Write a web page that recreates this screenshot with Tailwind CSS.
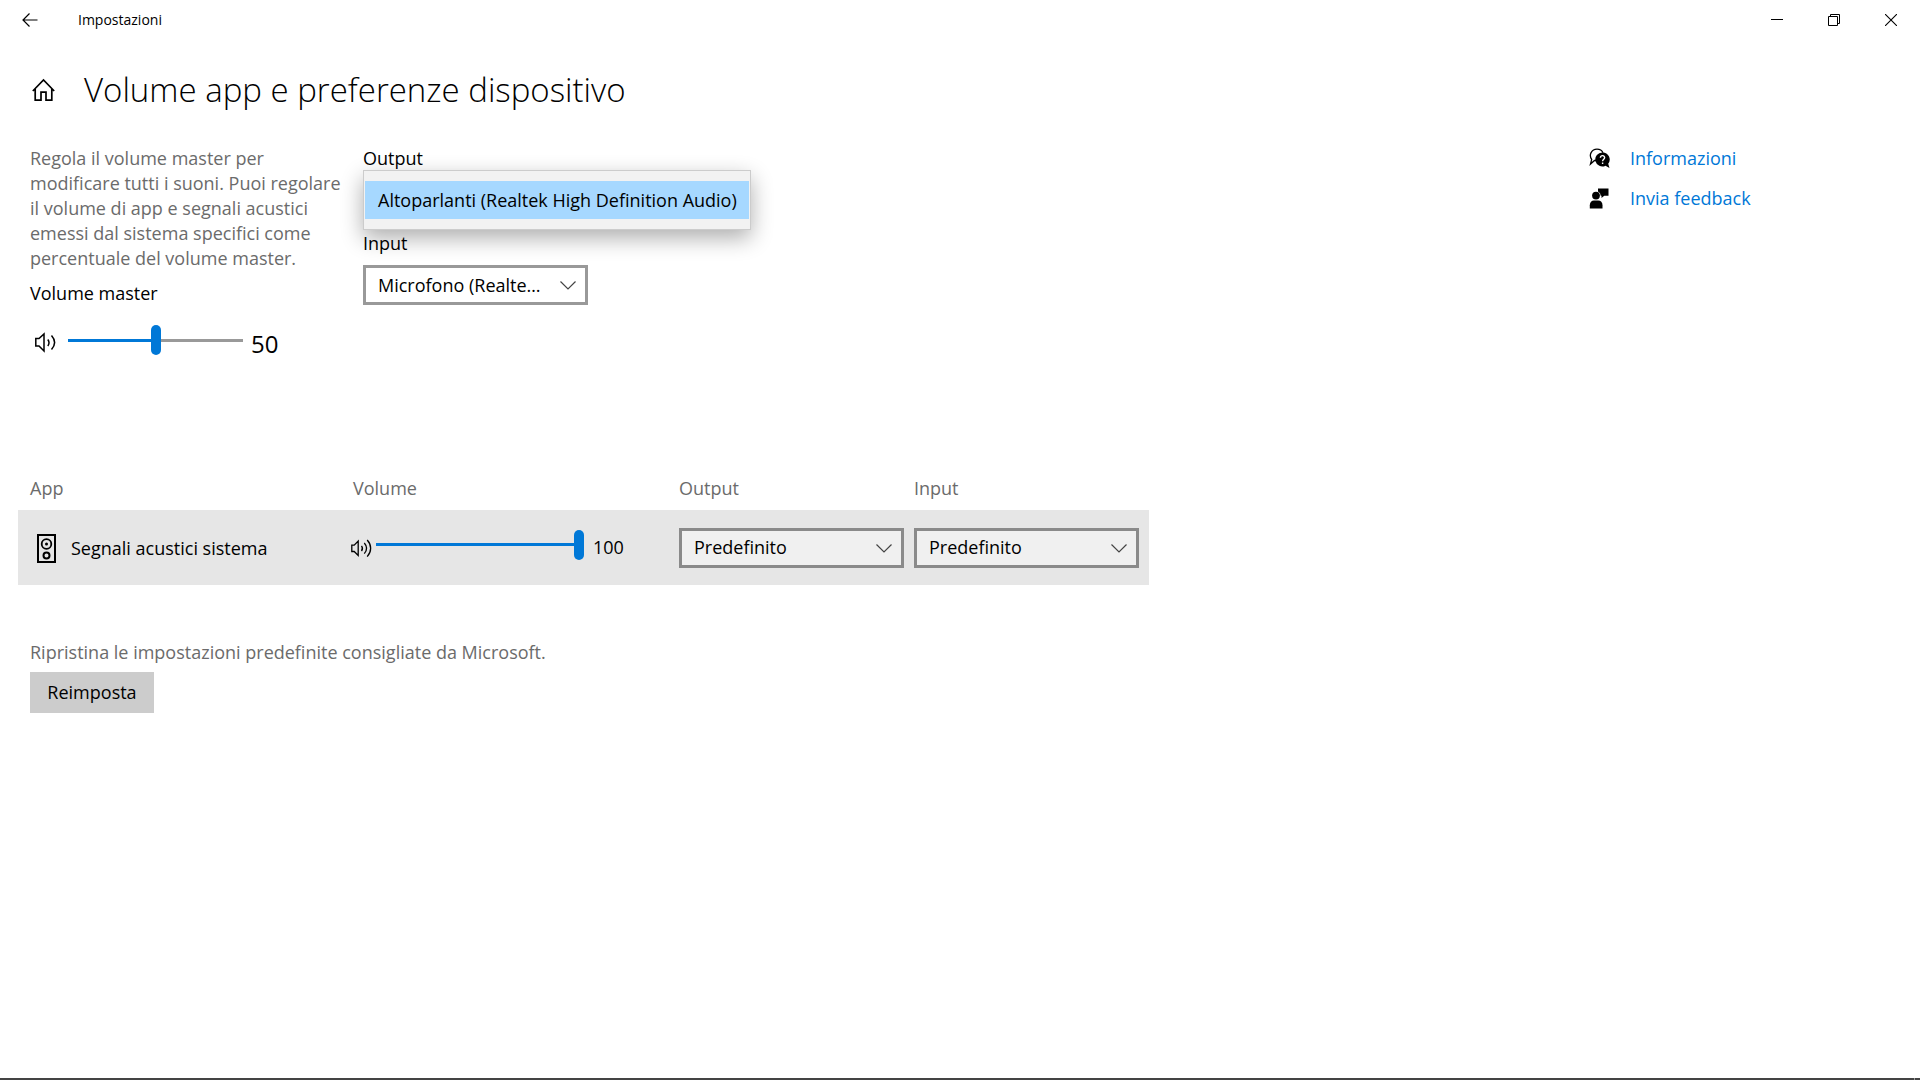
<!DOCTYPE html>
<html lang="it">
<head>
    <meta charset="UTF-8">
    <meta name="viewport" content="width=device-width, initial-scale=1.0">
    <title>Impostazioni</title>
    <script src="https://cdn.jsdelivr.net/npm/@tailwindcss/browser@4"></script>
</head>
<body class="min-h-screen flex flex-col bg-white text-black font-['Open_Sans','Noto_Sans',sans-serif] text-[18px] leading-[25px]">

    <!-- Title bar -->
    <header class="flex items-center h-10 pr-px text-[14px] leading-5">
        <button aria-label="Indietro" class="w-[60px] h-10 flex items-center justify-center">
            <svg class="w-4 h-4" viewBox="0 0 16 16" fill="none" stroke="currentColor" stroke-width="1.2"><path d="M15.5 8H1M7.500 1.500L1 8l6.500 6.500"/></svg>
        </button>
        <span class="ml-[18px] flex-1">Impostazioni</span>
        <button aria-label="Riduci a icona" class="w-[57px] h-10 flex items-center justify-center">
            <svg class="w-3 h-3" viewBox="0 0 12 12" fill="none" stroke="currentColor"><path d="M0 5.500h12"/></svg>
        </button>
        <button aria-label="Ripristina" class="w-[57px] h-10 flex items-center justify-center">
            <svg class="w-3 h-3" viewBox="0 0 12 12" fill="none" stroke="currentColor"><path d="M.5 2.500h9v9h-9zM2.500 2.500v-2h9v9h-2"/></svg>
        </button>
        <button aria-label="Chiudi" class="w-[57px] h-10 flex items-center justify-center">
            <svg class="w-3 h-3" viewBox="0 0 12 12" fill="none" stroke="currentColor" stroke-width="1.1"><path d="M0 0l12 12M12 0L0 12"/></svg>
        </button>
    </header>

    <div class="flex items-center h-[100px] pl-8">
        <a href="#" aria-label="Home" class="w-[52px]">
            <svg class="w-6 h-6" viewBox="0 0 24 24" fill="none" stroke="currentColor" stroke-width="1.7"><path d="M.8 13L11.500 2 22.200 13M3.200 11v11.200h5.800v-8h5v8h5.800V11"/></svg>
        </a>
        <h1 class="text-[33px] leading-[48px] font-light">Volume app e preferenze dispositivo</h1>
    </div>

    <main class="flex-1 flex justify-between pt-[6px]">
        <div class="flex-1">
            <div class="flex h-[329px] pl-[30px]">
                <!-- Master volume -->
                <section class="w-[333px] shrink-0">
                    <p class="w-[315px] text-[#6b6b6b]">Regola il volume master per modificare tutti i suoni. Puoi regolare il volume di app e segnali acustici emessi dal sistema specifici come percentuale del volume master.</p>
                    <label for="master" class="block mt-[10px]">Volume master</label>
                    <div class="flex items-center mt-[15px] pl-1">
                        <svg class="w-6 h-6 mt-1" viewBox="0 0 24 24" fill="none" stroke="currentColor" stroke-width="1.5"><path d="M1.800 8.500h3.200L10 4v17l-5-5H1.800zM13.800 9.500c1.500 2 1.500 4.500 0 6.500M17.500 5.500c4 4.500 4 9.500 0 14"/></svg>
                        <input id="master" type="range" min="0" max="100" value="50" class="ml-[10px] w-[175px] h-[30px] appearance-none bg-linear-to-r from-[#0078d7] from-50% to-[#999999] to-50% bg-[length:100%_3px] bg-no-repeat bg-center [&::-webkit-slider-thumb]:appearance-none [&::-webkit-slider-thumb]:w-[10px] [&::-webkit-slider-thumb]:h-[30px] [&::-webkit-slider-thumb]:rounded-full [&::-webkit-slider-thumb]:bg-[#0078d7]">
                        <output for="master" class="ml-2 mt-2 text-[24px] leading-[30px]">50</output>
                    </div>
                </section>

                <!-- Devices -->
                <section>
                    <label for="output" class="block">Output</label>
                    <div class="relative mt-[9px]">
                        <select id="output" class="block appearance-none w-[225px] h-10 pl-3 border-3 border-[#999999] bg-white">
                            <option>Altoparlanti (Realtek High Definition Audio)</option>
                        </select>
                        <ul role="listbox" aria-label="Output" class="absolute left-0 -top-[10px] w-[388px] py-[10px] px-px border border-[#cccccc] bg-[#f2f2f2] shadow-[0_8px_22px_rgba(0,0,0,0.32)]">
                            <li role="option" aria-selected="true" class="h-[38px] pl-[13px] flex items-center bg-[#a6d8ff] whitespace-nowrap">Altoparlanti (Realtek High Definition Audio)</li>
                        </ul>
                    </div>
                    <label for="input" class="block mt-[11px]">Input</label>
                    <div class="relative mt-[9px] w-[225px]">
                        <select id="input" class="block appearance-none w-full h-10 pl-3 pr-9 border-3 border-[#999999] bg-white truncate">
                            <option>Microfono (Realtek High Definition Audio)</option>
                        </select>
                        <svg class="absolute right-3 top-4 w-4 h-[9px] pointer-events-none" viewBox="0 0 16 9" fill="none" stroke="#444444" stroke-width="1.2"><path d="M.5.5L8 8 15.500.5"/></svg>
                    </div>
                </section>
            </div>

            <!-- Per-app volumes -->
            <table class="ml-[18px] w-[1131px] table-fixed text-left">
                <thead>
                    <tr class="h-[35px] align-top text-[#6b6b6b]">
                        <th class="w-[333px] pt-px pl-3 font-normal">App</th>
                        <th class="w-[328px] pt-px pl-[2px] font-normal">Volume</th>
                        <th class="w-[235px] pt-px font-normal">Output</th>
                        <th class="pt-px font-normal">Input</th>
                    </tr>
                </thead>
                <tbody>
                    <tr class="h-[75px] bg-[#e6e6e6]">
                        <td class="pt-[2px] pl-[19px]">
                            <div class="flex items-center gap-[15px]">
                                <svg class="w-[19px] h-[29px]" viewBox="0 0 19 29" fill="none" stroke="currentColor"><path stroke-width="2" d="M1 1h17v27H1z"/><circle cx="9.5" cy="10" r="4.8" stroke-width="1.8"/><circle cx="9.5" cy="10" r="1.5" fill="currentColor" stroke="none"/><circle cx="9.5" cy="21.5" r="3" stroke-width="2"/></svg>
                                <span>Segnali acustici sistema</span>
                            </div>
                        </td>
                        <td>
                            <div class="flex items-center">
                                <svg class="w-[21px] h-5" viewBox="0 0 21 20" fill="none" stroke="currentColor" stroke-width="1.3"><path d="M.8 7.200h2.400L7.200 3v14.500l-4-4H.8zM10.500 7.800c1.200 1.600 1.200 3.600 0 5.200M13.300 5c2.800 3.200 2.800 7.400 0 10.600M16.200 2c4.600 5 4.600 11.600 0 16.600"/></svg>
                                <input aria-label="Volume Segnali acustici sistema" type="range" min="0" max="100" value="100" class="ml-1 mb-[6px] w-[208px] h-[30px] appearance-none bg-linear-to-r from-[#0078d7] to-[#0078d7] bg-[length:100%_3px] bg-no-repeat bg-center [&::-webkit-slider-thumb]:appearance-none [&::-webkit-slider-thumb]:w-[10px] [&::-webkit-slider-thumb]:h-[30px] [&::-webkit-slider-thumb]:rounded-full [&::-webkit-slider-thumb]:bg-[#0078d7]">
                                <span class="ml-[9px]">100</span>
                            </div>
                        </td>
                        <td>
                            <div class="relative w-[225px]">
                                <select aria-label="Output" class="block appearance-none w-full h-10 pl-3 border-3 border-[#8a8a8a] bg-[#f0f0f0]">
                                    <option>Predefinito</option>
                                </select>
                                <svg class="absolute right-3 top-4 w-4 h-[9px] pointer-events-none" viewBox="0 0 16 9" fill="none" stroke="#444444" stroke-width="1.2"><path d="M.5.5L8 8 15.500.5"/></svg>
                            </div>
                        </td>
                        <td>
                            <div class="relative w-[225px]">
                                <select aria-label="Input" class="block appearance-none w-full h-10 pl-3 border-3 border-[#8a8a8a] bg-[#f0f0f0]">
                                    <option>Predefinito</option>
                                </select>
                                <svg class="absolute right-3 top-4 w-4 h-[9px] pointer-events-none" viewBox="0 0 16 9" fill="none" stroke="#444444" stroke-width="1.2"><path d="M.5.5L8 8 15.500.5"/></svg>
                            </div>
                        </td>
                    </tr>
                </tbody>
            </table>

            <div class="pl-[30px] mt-[55px]">
                <p class="text-[#6b6b6b]">Ripristina le impostazioni predefinite consigliate da Microsoft.</p>
                <button class="mt-[7px] w-[124px] h-[41px] bg-[#cccccc]">Reimposta</button>
            </div>
        </div>

        <!-- Help links -->
        <nav class="w-[331px] flex flex-col gap-[15px]">
            <a href="#" class="flex items-center gap-5 text-[#0078d7]">
                <svg class="w-[21px] h-[21px] text-black" viewBox="0 0 21 21"><path fill="none" stroke="currentColor" stroke-width="1.3" d="M7 12.500H5.500L1.500 16l1.200-4.500C-.5 7 2.500 1.200 8 1.200c3 0 5 1.300 6 3.500"/><path fill="currentColor" d="M13.500 4.500a7 7 0 1 0 3 13.200L20.500 20l-1.300-4.200A7 7 0 0 0 13.500 4.500z"/><path fill="none" stroke="white" stroke-width="1.4" d="M11.400 9.700c.2-2.800 4.400-2.600 4.200 0-.1 1.500-2 1.500-2 3.500M13.600 14.500V16"/></svg>
                Informazioni
            </a>
            <a href="#" class="flex items-center gap-5 text-[#0078d7]">
                <svg class="w-[21px] h-[21px] text-black" viewBox="0 0 21 21" fill="currentColor"><path d="M9 .5h10.500v7.200h-4.200L12.500 10V7.700h-.8A4.600 4.600 0 0 0 9 3.500z"/><circle cx="7" cy="7.6" r="3.9"/><path d="M.8 20.500v-3.300c0-2.800 1.800-4.700 4.200-4.700h4.200c2.600 0 4.300 1.900 4.300 4.700v3.300z"/></svg>
                Invia feedback
            </a>
        </nav>
    </main>

    <!-- Taskbar edge -->
    <footer class="h-[2px] pr-[5px] bg-[#444444] flex justify-end"><span class="w-px bg-[#999999]"></span></footer>
</body>
</html>
